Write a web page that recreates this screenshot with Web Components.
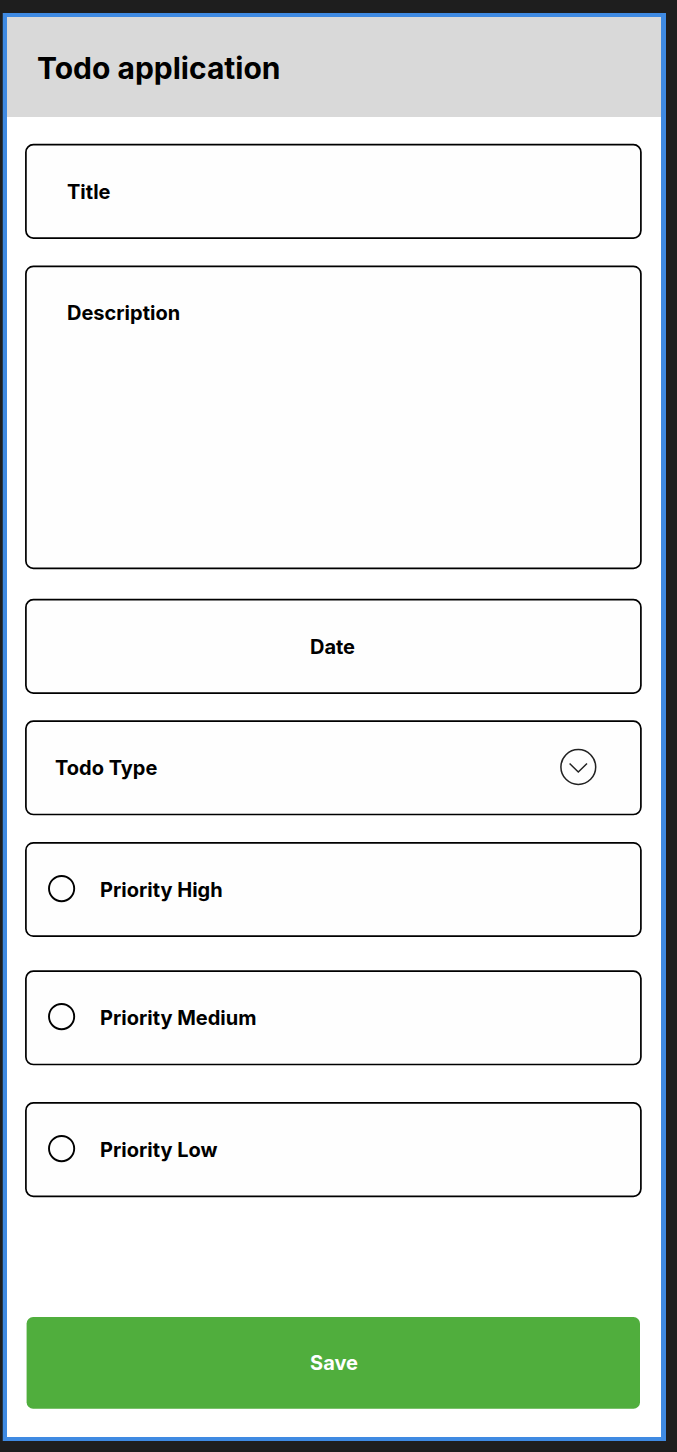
<!DOCTYPE html>
<html lang="en">
<head>
<meta charset="utf-8">
<title>Todo application</title>
<style>
html, body { margin: 0; background: #1e1e1e; }
body { font-family: Inter, sans-serif; color: #000; height: 1452px; overflow: hidden; }
</style>
</head>
<body>
<todo-screen>
  <todo-header slot="header">Todo application</todo-header>
  <todo-field style="--gap:26px;--y:1.7px;--pad:42px;--drop:2px">Title</todo-field>
  <todo-field style="--gap:26px;--y:1.3px;--pad:42px;--box:304px;--line:302.1px">Description</todo-field>
  <todo-field style="--gap:29px;--y:1.7px;--align:center;--pad:0px;--end:2px;--drop:2px">Date</todo-field>
  <todo-field style="--gap:26px;--y:1.1px;--pad:30px">Todo Type<chevron-icon slot="end"></chevron-icon></todo-field>
  <todo-field style="--gap:26px;--y:.8px"><radio-dot slot="start"></radio-dot>Priority High</todo-field>
  <todo-field style="--gap:32px;--y:1.1px"><radio-dot slot="start"></radio-dot>Priority Medium</todo-field>
  <todo-field style="--gap:36px;--y:.9px"><radio-dot slot="start"></radio-dot>Priority Low</todo-field>
  <save-button>Save</save-button>
</todo-screen>
<script>
function define(name, markup) {
  const template = document.createElement('template');
  template.innerHTML = markup;
  customElements.define(name, class extends HTMLElement {
    constructor() {
      super();
      this.attachShadow({ mode: 'open' }).append(template.content.cloneNode(true));
    }
  });
}

define('todo-screen', `
<style>
:host { display: block; padding: 13px 11px 11px 3px; }
.frame { box-sizing: border-box; height: 1428px; border: 4px solid #3f8ae2; border-right-width: 5px; background: #fff; box-shadow: -1px 0 #23394f; }
main { display: flex; flex-direction: column; padding: 0 19px 0 18px; }
</style>
<div class="frame"><slot name="header"></slot><main><slot></slot></main></div>`);

define('todo-header', `
<style>
:host { display: flex; align-items: center; box-sizing: border-box; height: 100px; padding: 1px 30px 0; background: #d9d9d9; font-size: 30px; font-weight: 700; line-height: 38px; }
</style>
<slot></slot>`);

define('todo-field', `
<style>
:host { display: grid; grid-template: var(--box, 96px) / 617px; margin-top: var(--gap); font-size: 20px; font-weight: 700; line-height: 24px; }
svg, .content { grid-area: 1 / 1; }
svg { display: block; width: 617px; height: var(--box, 96px); overflow: visible; }
rect { x: .9px; y: var(--y); width: 615px; height: var(--line, 93.4px); rx: 7.5px; fill: #fefefe; stroke: #000; stroke-width: 1.7px; }
.content { display: flex; align-items: center; justify-content: var(--align, flex-start); box-sizing: border-box; width: 617px; height: 96px; padding: var(--drop, 0px) var(--end, 45px) 0 var(--pad, 23px); }
::slotted([slot="end"]) { margin-left: auto; }
::slotted([slot="start"]) { margin-right: 24px; }
</style>
<svg aria-hidden="true"><rect/></svg>
<div class="content"><slot name="start"></slot><slot></slot><slot name="end"></slot></div>`);

define('radio-dot', `
<style>:host, svg { display: block; width: 28px; height: 28px; overflow: visible; }</style>
<svg viewBox="0 0 28 28"><circle cx="13.6" cy="12.6" r="12.6" fill="none" stroke="#000" stroke-width="1.9"/></svg>`);

define('chevron-icon', `
<style>:host, svg { display: block; width: 38px; height: 38px; overflow: visible; }</style>
<svg viewBox="0 0 38 38" fill="none" stroke="#222" stroke-width="1.5"><circle cx="19.3" cy="18" r="17.4"/><path d="M10.6 14.5 19.3 23 28 14.5"/></svg>`);

define('save-button', `
<style>
:host { display: grid; grid-template: 92px / 614px; place-items: center; margin: 119px 2px 0 1px; color: #fff; font-size: 20px; font-weight: 700; line-height: 24px; }
svg, span { grid-area: 1 / 1; }
svg { display: block; width: 614px; height: 92px; }
span { padding: 0 0 0 2px; }
</style>
<svg aria-hidden="true"><rect x=".6" y="0" width="613.4" height="91.7" rx="6.5" fill="#50ae3d"/></svg>
<span><slot></slot></span>`);
</script>
</body>
</html>
